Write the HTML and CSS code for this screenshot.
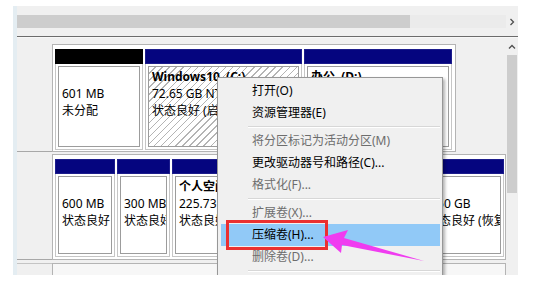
FILE: index.html
```html
<!DOCTYPE html>
<html lang="zh-CN">
<head>
<meta charset="utf-8">
<link rel="stylesheet" href="styles.css">
</head>
<body>
<div class="window">
  <div class="top-gap"></div>
  <div class="hscroll">
    <div class="hthumb"></div>
    <div class="htrack"></div>
    <div class="sbtn"><svg width="6" height="8" viewBox="0 0 6 8"><polyline points="1.5,1 4.5,4 1.5,7" fill="none" stroke="#505050" stroke-width="1.3"/></svg></div>
  </div>
  <div class="splitter"></div>
  <div class="pane">
    <div class="disks">
      <div class="disk disk1">
        <div class="label"></div>
        <div class="parts">
          <div class="part w88">
            <div class="bar black"></div>
            <div class="frame"><div class="box h81"><div class="name">&nbsp;</div><div>601 MB</div><div>未分配</div></div></div>
          </div>
          <div class="part w157">
            <div class="bar"></div>
            <div class="frame"><div class="box h81 hatch"><div class="name">Windows10 &nbsp;(C:)</div><div>72.65 GB NTFS</div><div>状态良好 (启动, 页面文件, 故障转储, 主分区)</div></div></div>
          </div>
          <div class="part w148">
            <div class="bar"></div>
            <div class="frame"><div class="box h81"><div class="name">办公 &nbsp;(D:)</div><div>150.00 GB NTFS</div><div>状态良好 (主分区)</div></div></div>
          </div>
        </div>
      </div>
      <div class="disk disk2">
        <div class="label"></div>
        <div class="parts">
          <div class="part w60">
            <div class="bar"></div>
            <div class="frame"><div class="box h78"><div class="name">&nbsp;</div><div>600 MB</div><div>状态良好 (OEM 分区)</div></div></div>
          </div>
          <div class="part w53">
            <div class="bar"></div>
            <div class="frame"><div class="box h78"><div class="name">&nbsp;</div><div>300 MB</div><div>状态良好 (EFI 系统分区)</div></div></div>
          </div>
          <div class="part w238">
            <div class="bar"></div>
            <div class="frame"><div class="box h78"><div class="name">个人空间 &nbsp;(E:)</div><div>225.73 GB NTFS</div><div>状态良好 (主分区)</div></div></div>
          </div>
          <div class="part w92">
            <div class="bar"></div>
            <div class="frame"><div class="box h78 shifted"><div class="name">&nbsp;</div><div>9.50 GB</div><div>状态良好 (恢复分区)</div></div></div>
          </div>
        </div>
      </div>
      <div class="disk disk3">
        <div class="label"></div>
        <div class="parts parts3"></div>
      </div>
    </div>
    <div class="vscroll">
      <div class="sbtn up"><svg width="8" height="6" viewBox="0 0 8 6"><polyline points="1,4.5 4,1.5 7,4.5" fill="none" stroke="#505050" stroke-width="1.3"/></svg></div>
      <div class="vthumb"></div>
    </div>
  </div>

  <div class="menu">
    <div class="item">打开(O)</div>
    <div class="item">资源管理器(E)</div>
    <div class="sep"></div>
    <div class="item off">将分区标记为活动分区(M)</div>
    <div class="item">更改驱动器号和路径(C)...</div>
    <div class="item off">格式化(F)...</div>
    <div class="sep"></div>
    <div class="item off">扩展卷(X)...</div>
    <div class="item hot">压缩卷(H)...</div>
    <div class="item off">删除卷(D)...</div>
    <div class="sep"></div>
    <div class="item off">添加镜像(A)...</div>
  </div>
  <div class="redbox"></div>
</div>
<svg class="arrow" width="547" height="290" viewBox="0 0 547 290">
  <polygon points="323,237 348,230 344,238 424,261 342,245 341,253" fill="#f03cf0"/>
</svg>
</body>
</html>
```

FILE: styles.css
```css
* { box-sizing: border-box; }
html, body { margin: 0; padding: 0; background: #fff; }
body {
  position: relative;
  width: 547px;
  height: 290px;
  overflow: hidden;
  font-family: "Noto Sans", "Noto Sans CJK SC", sans-serif;
  font-size: 12px;
  color: #000;
}

.window {
  position: relative;
  margin: 6px 0 0 13px;
  width: 505px;
  height: 269px;
  background: #f0f0f0;
  border-left: 4px solid #e4edf2;
  overflow: hidden;
  display: flex;
  flex-direction: column;
}

.top-gap { height: 9px; flex: none; }

.hscroll { height: 13px; flex: none; display: flex; }
.hthumb { width: 393px; background: #cdcdcd; }
.htrack { flex: 1; background: #ebebeb; }
.sbtn { width: 12px; display: flex; align-items: center; justify-content: center; }

.splitter {
  flex: none;
  margin-top: 8px;
  height: 2px;
  border-top: 1px solid #6c6c6c;
  border-bottom: 1px solid #f7f7f7;
}

.pane { flex: 1; display: flex; min-height: 0; }
.disks { flex: 1; display: flex; flex-direction: column; }

.disk { display: flex; flex: none; }
.disk1 { margin-top: 4px; }
.disk2 { margin-top: 2px; }
.disk3 { margin-top: 3px; flex: 1; }

.label { width: 35px; flex: none; border-bottom: 1px solid #a8a8a8; }
.disk3 .label { border-bottom: none; border-top: 1px solid #c4c4c4; }

.parts {
  display: flex;
  gap: 2px;
  background: #fff;
  border: 1px solid #b4b4b4;
  padding: 4px 1px 2px 2px;
}
.disk1 .parts { margin-top: 2px; padding: 4px 3px 1px 2px; }
.parts3 { width: 454px; border-bottom: none; background: #f7f7f7; }

.part { display: flex; flex-direction: column; flex: none; }
.w88 { width: 88px; }
.w157 { width: 157px; }
.w148 { width: 148px; }
.w60 { width: 60px; }
.w53 { width: 53px; }
.w238 { width: 238px; }
.w92 { width: 92px; }

.bar { height: 15px; background: #05057f; border: 1px solid #1c1c8c; }
.bar.black { background: #000; border-color: #000; }

.frame {
  border: 1px solid #c6c6c6;
  border-top: none;
  padding: 2px;
}
.box {
  border: 1px solid #9c9c9c;
  background: #fff;
  padding: 1px 3px;
  line-height: 17px;
  white-space: nowrap;
  overflow: hidden;
}
.box.shifted { padding-left: 11px; }
.h81 { height: 81px; }
.h78 { height: 78px; }
.name { font-weight: bold; }
.hatch {
  background: repeating-linear-gradient(135deg, #fff 0 4px, #b4b4b4 4px 5px);
}

.vscroll { width: 12px; flex: none; display: flex; flex-direction: column; }
.sbtn.up { height: 17px; }
.vthumb { height: 138px; margin: 0 1px; background: #cdcdcd; }

.menu {
  position: absolute;
  left: 200px;
  top: 71px;
  width: 226px;
  height: 230px;
  background: #f0f0f0;
  border: 1px solid #979797;
  box-shadow: 2px 2px 3px rgba(0, 0, 0, 0.3);
  padding: 2px;
}
.item {
  height: 22px;
  line-height: 22px;
  padding-left: 32px;
  white-space: nowrap;
  color: #000;
}
.item.off { color: #6d6d6d; }
.item.hot { background: #91c9f7; margin-left: 1px; padding-left: 31px; }
.sep {
  margin: 2px 0 2px 28px;
  height: 2px;
  border-top: 1px solid #d7d7d7;
  border-bottom: 1px solid #fff;
}

.redbox {
  position: absolute;
  left: 209px;
  top: 214px;
  width: 102px;
  height: 30px;
  border: 3px solid #eb3030;
}

.arrow { position: absolute; left: 0; top: 0; pointer-events: none; }
```
